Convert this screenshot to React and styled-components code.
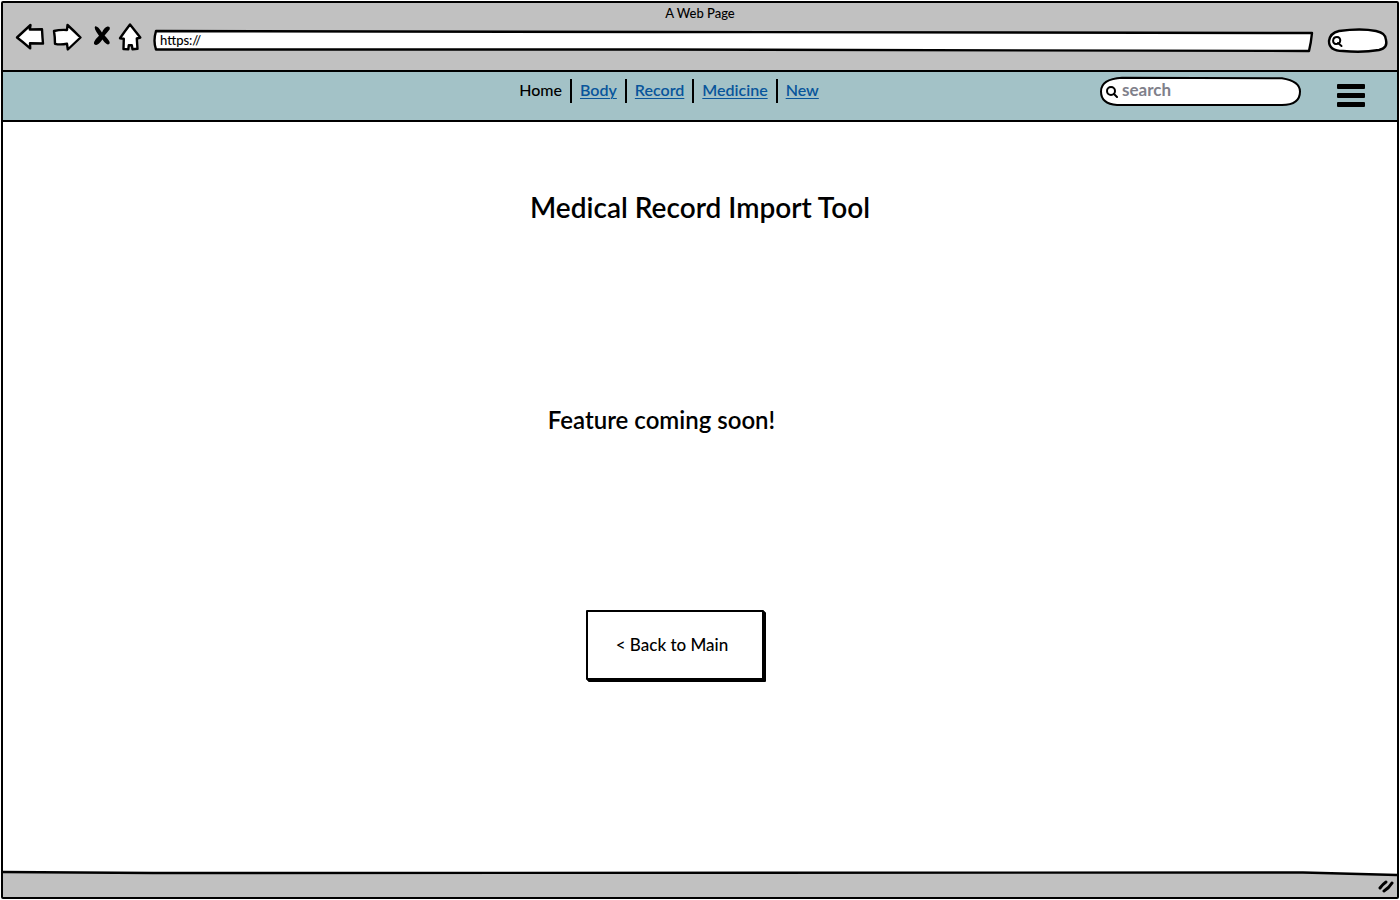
import React from "react";
import styled, { createGlobalStyle } from "styled-components";

const INK = "#000";
const CHROME = "#c1c1c1";
const TEAL = "#a3c2c7";

const GlobalStyle = createGlobalStyle`
  *, *::before, *::after { box-sizing: border-box; }
  body { margin: 0; background: #fff; }
  body, button, input { font-family: Lato, "Open Sans", sans-serif; color: ${INK}; }
`;

const Window = styled.div`
  display: flex;
  flex-direction: column;
  min-height: calc(100vh - 2px);
  margin: 1px;
  border: 2px solid ${INK};
  border-radius: 2px;
`;

const Chrome = styled.header`
  background: ${CHROME};
  border-bottom: 2px solid ${INK};
`;

const WindowTitle = styled.div`
  height: 20px;
  font-size: 13px;
  line-height: 20px;
  font-weight: 500;
  text-align: center;
`;

const Toolbar = styled.div`
  display: flex;
  align-items: flex-start;
  gap: 9px;
  height: 47px;
  padding: 0 10px 0 13px;
`;

const IconButton = styled.button`
  flex: none;
  width: ${(p) => p.$width}px;
  height: 28px;
  padding: 0;
  border: 0;
  background: none;
  cursor: pointer;

  svg { display: block; overflow: visible; }
`;

const Field = styled.label`
  position: relative;
  flex: ${(p) => (p.$width ? "none" : "1")};
  width: ${(p) => (p.$width ? `${p.$width}px` : "auto")};
  height: ${(p) => p.$height}px;
  display: flex;
  align-items: center;
`;

const AddressField = styled(Field)`
  margin: 8px 7px 0 4px;
`;

const QuickField = styled(Field)`
  margin-top: 6px;
`;

const Outline = styled.svg`
  position: absolute;
  inset: 0;
  width: 100%;
  height: 100%;
  overflow: visible;

  path {
    fill: #fff;
    stroke: ${INK};
    stroke-width: ${(p) => p.$stroke || 2};
    stroke-linejoin: round;
    vector-effect: non-scaling-stroke;
  }
`;

const Glass = styled.svg`
  position: relative;
  flex: none;
  margin-left: ${(p) => p.$inset}px;
  fill: none;
  stroke: ${INK};
  stroke-width: 2px;
  stroke-linecap: round;
`;

const TextInput = styled.input`
  position: relative;
  flex: 1;
  min-width: 0;
  height: 100%;
  padding: 0 6px ${(p) => p.$lift || 0}px ${(p) => p.$indent}px;
  border: 0;
  outline: 0;
  background: none;
  font-size: ${(p) => p.$size}px;
  font-weight: ${(p) => p.$weight || 500};

  &::placeholder { color: #80808a; opacity: 1; }
`;

const SiteBar = styled.div`
  display: grid;
  grid-template-columns: 1fr auto 1fr;
  align-items: start;
  height: 50px;
  background: ${TEAL};
  border-bottom: 2px solid ${INK};
`;

const Menu = styled.nav`
  grid-column: 2;
  display: flex;
  align-items: center;
  margin-top: 7px;
  margin-right: 62px;
  font-size: 16px;
  line-height: 24px;
`;

const MenuLink = styled.a`
  padding: 0 8px;
  height: 24px;
  line-height: 22px;
  font-weight: ${(p) => (p.$current ? 500 : 600)};
  color: ${(p) => (p.$current ? INK : "#08559b")};
  text-decoration: ${(p) => (p.$current ? "none" : "underline")};
  text-decoration-thickness: 1px;
  text-underline-offset: 2px;

  & + & { border-left: 2px solid ${INK}; }
`;

const Tools = styled.div`
  display: flex;
  justify-content: flex-end;
  gap: 36px;
  padding: 5px 32px 0 0;
`;

const MenuButton = styled.button`
  display: flex;
  flex-direction: column;
  gap: 4px;
  width: 28px;
  margin-top: 7px;
  padding: 0;
  border: 0;
  background: none;
  cursor: pointer;

  span {
    width: 28px;
    height: 5px;
    border-radius: 1px;
    background: ${INK};
  }
`;

const Main = styled.main`
  flex: 1;
  display: flex;
  flex-direction: column;
  align-items: center;
  padding: 65px 24px 188px;
`;

const Title = styled.h1`
  margin: 0;
  font-size: 28px;
  line-height: 40px;
  font-weight: 600;
`;

const Notice = styled.p`
  margin: 173px 77px 0 0;
  font-size: 24px;
  line-height: 40px;
  font-weight: 600;
`;

const BackButton = styled.button`
  width: 178px;
  height: 70px;
  margin: 170px 50px 0 0;
  padding: 0 6px 2px 0;
  border: 2px solid ${INK};
  border-radius: 1px;
  background: #fff;
  box-shadow: 2px 2px 0 ${INK}, 1px 1px 0 ${INK};
  font-size: 17px;
  font-weight: 500;
  cursor: pointer;
`;

const StatusBar = styled.footer`
  position: relative;
  display: flex;
  justify-content: flex-end;
  align-items: center;
  height: 26px;
  padding-right: 3px;
  padding-top: 4px;
`;

const StatusShape = styled.svg`
  position: absolute;
  inset: 0;
  width: 100%;
  height: 100%;
  overflow: visible;
`;

const Grip = styled.svg`
  position: relative;
  fill: none;
  stroke: ${INK};
  stroke-width: 3px;
  stroke-linecap: round;
`;

const arrowProps = {
  fill: "#fff",
  stroke: INK,
  strokeWidth: 2.4,
  strokeLinejoin: "round",
};

export default function App() {
  return (
    <>
      <GlobalStyle />
      <Window>
        <Chrome>
          <WindowTitle>A Web Page</WindowTitle>
          <Toolbar>
            <IconButton $width={28} aria-label="Back">
              <svg width="28" height="28" viewBox="0 0 28 28">
                <path {...arrowProps} d="M1 14.5 14.5 2 13.8 6.5 26 6.2Q26.4 14 27 20.5L14 20.2 14.2 25.3Q7 19 1 14.5Z" />
              </svg>
            </IconButton>
            <IconButton $width={28} aria-label="Forward">
              <svg width="28" height="28" viewBox="0 0 28 28">
                <path {...arrowProps} d="M1 8Q7 6.5 14 7L14.5 2Q21 8 27.5 14.5L14.8 26.5 14 20.8Q7 22 2 20.8 2 14 1 8Z" />
              </svg>
            </IconButton>
            <IconButton $width={20} aria-label="Stop">
              <svg width="20" height="28" viewBox="0 0 20 28">
                <path
                  fill={INK}
                  d="M5.2 3.2Q7.8 2.6 12 9.6 14 4.4 17.5 3.6 20.6 3.4 19.6 6.6 17.6 9.2 14.6 12.4 20.6 18.6 19.6 20.4 17.2 23.6 12.4 16.6 8.4 22.4 5.8 21.9 3.2 21.6 4.2 18.8 5.6 15.8 9 12.8 3.2 4.8 5.2 3.2Z"
                />
              </svg>
            </IconButton>
            <IconButton $width={22} aria-label="Home">
              <svg width="22" height="28" viewBox="0 0 22 28">
                <path {...arrowProps} d="M11 1.5 21.3 14.5 17.8 15.5 18.5 25.8 13.5 26.3 12.8 22.3 9.8 22.2 9.3 26.4 4.5 26 4.8 15.8 1 15.2Q6 8 11 1.5Z" />
              </svg>
            </IconButton>
            <AddressField $height={20}>
              <Outline $stroke={2.4} viewBox="0 0 1156 20" preserveAspectRatio="none" aria-hidden="true">
                <path d="M2 0 500 1 1156 2Q1155 12 1153 20L500 18.5 2 18.5Q-1 10 2 0Z" />
              </Outline>
              <TextInput $size={13} $indent={6} $lift={2} aria-label="Address" defaultValue="https://" />
            </AddressField>
            <QuickField $width={59} $height={24}>
              <Outline $stroke={2.4} viewBox="0 0 59 24" preserveAspectRatio="none" aria-hidden="true">
                <path d="M11 2Q33-1 48 2 58 4 58 11 60 19 51 21 34 24 15 22 1 22 1 12 2 4 11 2Z" />
              </Outline>
              <Glass $inset={4} width="11" height="14" viewBox="0 0 11 14" aria-hidden="true">
                <path d="M5 3C0 3 0 10 4 10 9.500 10 9.500 3 5 3M6 9 9.500 12" />
              </Glass>
              <TextInput $size={13} $indent={6} aria-label="Quick search" />
            </QuickField>
          </Toolbar>
        </Chrome>

        <SiteBar>
          <Menu>
            <MenuLink $current href="#home">Home</MenuLink>
            <MenuLink href="#body">Body</MenuLink>
            <MenuLink href="#record">Record</MenuLink>
            <MenuLink href="#medicine">Medicine</MenuLink>
            <MenuLink href="#new">New</MenuLink>
          </Menu>
          <Tools>
            <Field $width={201} $height={29}>
              <Outline viewBox="0 0 201 28" preserveAspectRatio="none" aria-hidden="true">
                <path d="M22 .8 182 1.2Q200 4 200 14 200 27 182 27L17 27Q1 26 1 14 1 2 22 .8Z" />
              </Outline>
              <Glass $inset={6} width="12" height="12" viewBox="0 0 12 12" aria-hidden="true">
                <circle cx="5" cy="5" r="4" />
                <path d="M8 8 11 11" />
              </Glass>
              <TextInput $size={17} $weight={700} $indent={4} $lift={4} placeholder="search" aria-label="Search" />
            </Field>
            <MenuButton aria-label="Menu">
              <span />
              <span />
              <span />
            </MenuButton>
          </Tools>
        </SiteBar>

        <Main>
          <Title>Medical Record Import Tool</Title>
          <Notice>Feature coming soon!</Notice>
          <BackButton>&lt; Back to Main</BackButton>
        </Main>

        <StatusBar>
          <StatusShape viewBox="0 0 1394 26" preserveAspectRatio="none" aria-hidden="true">
            <path fill={CHROME} d="M0 1 150 2 1300 1.5 1394 4V26H0Z" />
            <path fill="none" stroke={INK} strokeWidth="2.4" d="M0 1 150 2 1300 1.5 1394 4" />
          </StatusShape>
          <Grip width="16" height="14" viewBox="0 0 16 14" aria-hidden="true">
            <path d="M2 9Q5 5 8 3M6 12Q11 9 14 4" />
          </Grip>
        </StatusBar>
      </Window>
    </>
  );
}
